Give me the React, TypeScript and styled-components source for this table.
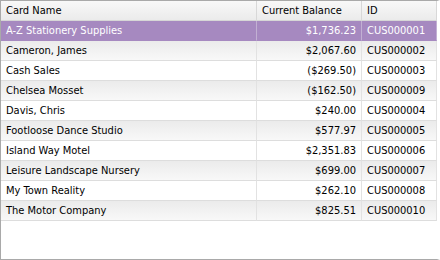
import React from 'react'
import styled, { createGlobalStyle } from 'styled-components'

const GlobalStyle = createGlobalStyle`
  html, body {
    margin: 0;
    padding: 0;
    background: #ffffff;
  }
  body {
    font-family: "DejaVu Sans Condensed", "Liberation Sans", Arial, sans-serif;
    font-size: 11px;
    color: #000;
  }
`

const Frame = styled.div`
  width: 440px;
  height: 260px;
  box-sizing: border-box;
  border: 1px solid #a9a9a9;
  border-right-width: 3px;
  border-right-color: #ffffff;
  position: relative;
  background: #ffffff;
  overflow: hidden;

  &:after {
    content: '';
    position: absolute;
    top: -1px;
    right: -3px;
    bottom: -1px;
    width: 1px;
    background: #a9a9a9;
  }
`

const Grid = styled.div`
  display: grid;
  grid-template-columns: 256px 105px 75px;
`

const HeaderCell = styled.div`
  height: 20px;
  box-sizing: border-box;
  padding: 0 5px;
  display: flex;
  align-items: center;
  background: linear-gradient(#f8f8f8, #ebebeb);
  border-bottom: 1px solid #d6d6d6;
  border-right: 1px solid #d8d8d8;
  white-space: nowrap;
`

const Cell = styled.div<{ $alt?: boolean; $selected?: boolean; $right?: boolean }>`
  height: 20px;
  box-sizing: border-box;
  padding: 0 5px;
  display: flex;
  align-items: center;
  justify-content: ${({ $right }) => ($right ? 'flex-end' : 'flex-start')};
  white-space: nowrap;
  border-bottom: 1px solid ${({ $selected }) => ($selected ? '#a689c0' : '#dddddd')};
  border-right: 1px solid ${({ $selected }) => ($selected ? '#c2b0d3' : '#e2e2e2')};
  color: ${({ $selected }) => ($selected ? '#ffffff' : '#000000')};
  background: ${({ $selected, $alt }) =>
    $selected ? '#a689c0' : $alt ? 'linear-gradient(#ebebeb, #f8f8f8)' : '#ffffff'};
`

type Row = { name: string; balance: string; id: string }

const rows: Row[] = [
  { name: 'A-Z Stationery Supplies', balance: '$1,736.23', id: 'CUS000001' },
  { name: 'Cameron, James', balance: '$2,067.60', id: 'CUS000002' },
  { name: 'Cash Sales', balance: '($269.50)', id: 'CUS000003' },
  { name: 'Chelsea Mosset', balance: '($162.50)', id: 'CUS000009' },
  { name: 'Davis, Chris', balance: '$240.00', id: 'CUS000004' },
  { name: 'Footloose Dance Studio', balance: '$577.97', id: 'CUS000005' },
  { name: 'Island Way Motel', balance: '$2,351.83', id: 'CUS000006' },
  { name: 'Leisure Landscape Nursery', balance: '$699.00', id: 'CUS000007' },
  { name: 'My Town Reality', balance: '$262.10', id: 'CUS000008' },
  { name: 'The Motor Company', balance: '$825.51', id: 'CUS000010' },
]

const App: React.FC = () => {
  return (
    <>
      <GlobalStyle />
      <Frame>
        <Grid>
          <HeaderCell>Card Name</HeaderCell>
          <HeaderCell>Current Balance</HeaderCell>
          <HeaderCell>ID</HeaderCell>
          {rows.map((row, i) => {
            const selected = i === 0
            const alt = i % 2 === 1
            return (
              <React.Fragment key={row.id}>
                <Cell $alt={alt} $selected={selected}>{row.name}</Cell>
                <Cell $alt={alt} $selected={selected} $right>{row.balance}</Cell>
                <Cell $alt={alt} $selected={selected}>{row.id}</Cell>
              </React.Fragment>
            )
          })}
        </Grid>
      </Frame>
    </>
  )
}

export default App
